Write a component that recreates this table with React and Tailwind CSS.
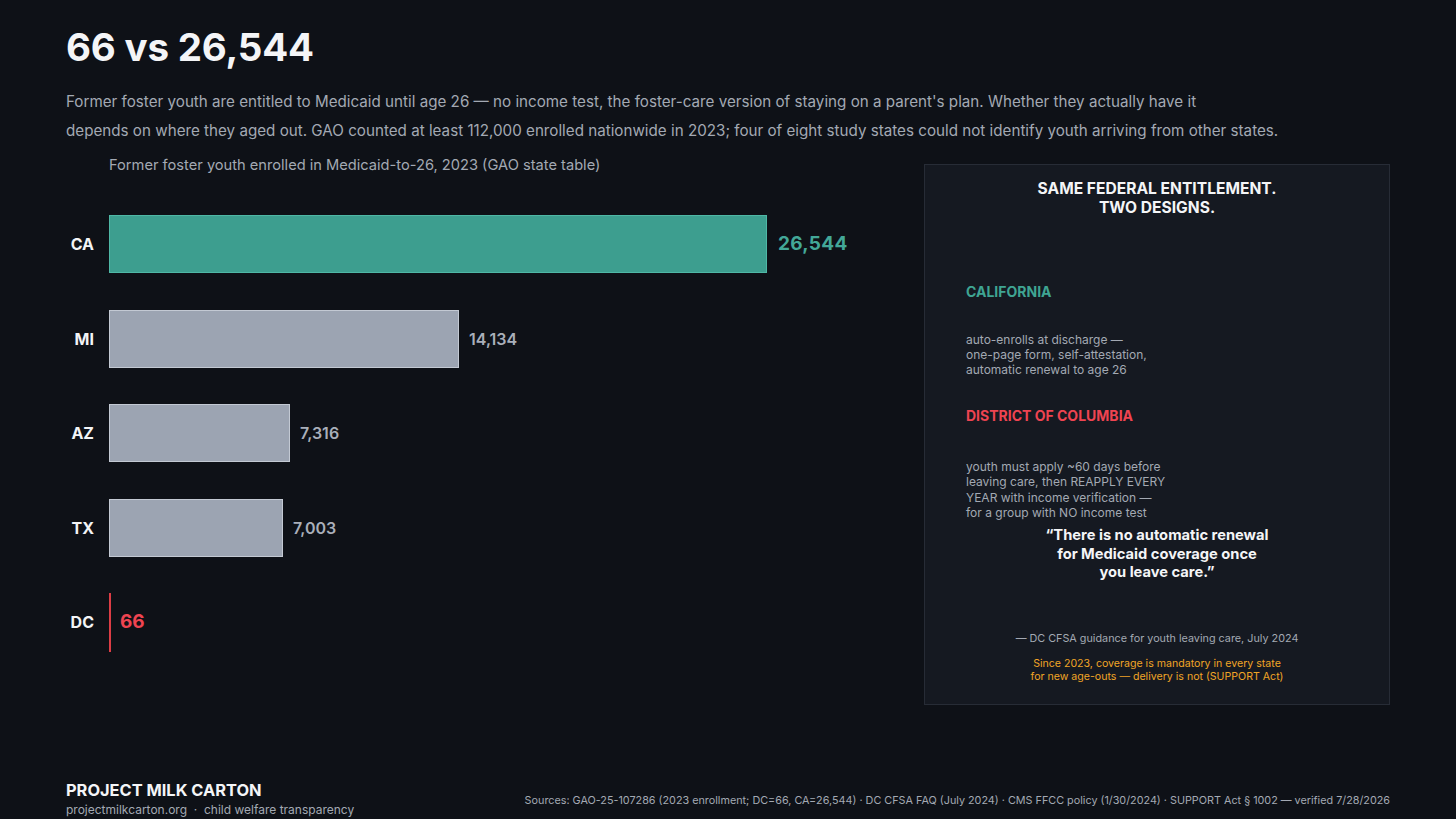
import React from "react";

const rows = [
  { label: "CA", value: 26544, text: "26,544", kind: "ca" },
  { label: "MI", value: 14134, text: "14,134", kind: "gray" },
  { label: "AZ", value: 7316, text: "7,316", kind: "gray" },
  { label: "TX", value: 7003, text: "7,003", kind: "gray" },
  { label: "DC", value: 66, text: "66", kind: "dc" },
];

const SCALE = 658 / 26544;

function Row({ r }) {
  const w = Math.max(2, Math.round(r.value * SCALE));
  return (
    <div className="flex items-center h-[94.5px]">
      <div className="w-[28px] text-right text-[16px] font-bold text-[#f3f4f6]">{r.label}</div>
      <div className="w-[15px]" />
      {r.kind === "dc" ? (
        <div className="w-[2px] h-[59px] bg-[#dc3d45]" />
      ) : (
        <div
          className={
            r.kind === "ca"
              ? "h-[58px] bg-[#3d9e8f] border border-[#4fb8a6]"
              : "h-[58px] bg-[#9ca4b2] border border-[#c3c9d3]"
          }
          style={{ width: w }}
        />
      )}
      {r.kind === "ca" && (
        <div className="ml-[11px] text-[19px] font-bold text-[#43a898] tracking-[0.3px]">{r.text}</div>
      )}
      {r.kind === "gray" && (
        <div className="ml-[10px] text-[16px] font-semibold text-[#a9afba]">{r.text}</div>
      )}
      {r.kind === "dc" && (
        <div className="ml-[9px] text-[19px] font-bold text-[#ef4451]">{r.text}</div>
      )}
    </div>
  );
}

export default function App() {
  return (
    <div
      className="w-[1456px] h-[819px] bg-[#0e1117] text-white flex flex-col px-[66px] overflow-hidden"
      style={{ fontFamily: "Inter, 'Noto Sans', sans-serif" }}
    >
      <h1 className="pt-[23px] text-[38.5px] leading-[48px] font-bold text-[#f4f5f7] tracking-[-0.2px]">66 vs 26,544</h1>
      <p className="mt-[16px] text-[15.2px] leading-[29px] text-[#a3a9b3]">
        Former foster youth are entitled to Medicaid until age 26 — no income test, the foster-care version of staying on a parent's plan. Whether they actually have it
        <br />
        depends on where they aged out. GAO counted at least 112,000 enrolled nationwide in 2023; four of eight study states could not identify youth arriving from other states.
      </p>

      <div className="flex mt-[10px]">
        <div className="flex-1">
          <div className="pl-[43px] text-[14.65px] leading-[20px] text-[#a3a9b3]">
            Former foster youth enrolled in Medicaid-to-26, 2023 (GAO state table)
          </div>
          <div className="mt-[22px] flex flex-col">
            {rows.map((r) => (
              <Row key={r.label} r={r} />
            ))}
          </div>
        </div>

        <div className="mt-[9px] w-[466px] h-[541px] bg-[#151921] border border-[#272c36] flex flex-col">
          <div className="mt-[14px] text-center text-[15.6px] leading-[19px] font-bold text-[#f4f5f7]">
            SAME FEDERAL ENTITLEMENT.
            <br />
            TWO DESIGNS.
          </div>
          <div className="px-[41px] flex flex-col">
            <div className="mt-[66px] text-[14px] leading-[18px] font-bold text-[#3fa593]">CALIFORNIA</div>
            <div className="mt-[31px] text-[12px] leading-[15px] text-[#a3a9b3]">
              auto-enrolls at discharge —
              <br />
              one-page form, self-attestation,
              <br />
              automatic renewal to age 26
            </div>
            <div className="mt-[30px] text-[14px] leading-[18px] font-bold text-[#ef4451]">DISTRICT OF COLUMBIA</div>
            <div className="mt-[34px] text-[12px] leading-[15.3px] text-[#a3a9b3]">
              youth must apply ~60 days before
              <br />
              leaving care, then REAPPLY EVERY
              <br />
              YEAR with income verification —
              <br />
              for a group with NO income test
            </div>
          </div>
          <div className="mt-[6px] text-center text-[14.7px] leading-[18.5px] font-bold text-[#f4f5f7]">
            “There is no automatic renewal
            <br />
            for Medicaid coverage once
            <br />
            you leave care.”
          </div>
          <div className="mt-[50px] text-center text-[10.8px] leading-[14px] text-[#a3a9b3]">
            — DC CFSA guidance for youth leaving care, July 2024
          </div>
          <div className="mt-[11px] text-center text-[10.6px] leading-[13.5px] text-[#f0a526]">
            Since 2023, coverage is mandatory in every state
            <br />
            for new age-outs — delivery is not (SUPPORT Act)
          </div>
        </div>
      </div>

      <div className="mt-auto pb-[2px] flex items-end justify-between">
        <div>
          <div className="text-[16.4px] leading-[20px] font-bold text-[#f4f5f7]">PROJECT MILK CARTON</div>
          <div className="mt-[2px] text-[12px] leading-[15px] text-[#a3a9b3]">
            projectmilkcarton.org &nbsp;·&nbsp; child welfare transparency
          </div>
        </div>
        <div className="mb-[9px] text-[10.8px] leading-[14px] text-[#a3a9b3]">
          Sources: GAO-25-107286 (2023 enrollment; DC=66, CA=26,544) · DC CFSA FAQ (July 2024) · CMS FFCC policy (1/30/2024) · SUPPORT Act § 1002 — verified 7/28/2026
        </div>
      </div>
    </div>
  );
}
